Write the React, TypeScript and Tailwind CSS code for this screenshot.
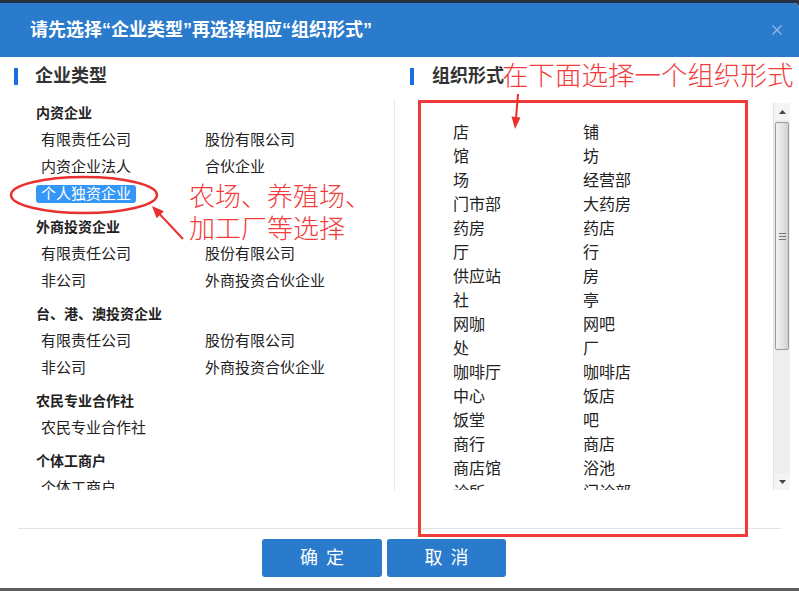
import React from 'react';

const CJK = { fontFamily: '"Liberation Sans","Noto Sans CJK SC",sans-serif' };

type Group = { title: string; rows: string[][] };

const GROUPS: Group[] = [
  {
    title: '内资企业',
    rows: [
      ['有限责任公司', '股份有限公司'],
      ['内资企业法人', '合伙企业'],
      ['个人独资企业'],
    ],
  },
  {
    title: '外商投资企业',
    rows: [
      ['有限责任公司', '股份有限公司'],
      ['非公司', '外商投资合伙企业'],
    ],
  },
  {
    title: '台、港、澳投资企业',
    rows: [
      ['有限责任公司', '股份有限公司'],
      ['非公司', '外商投资合伙企业'],
    ],
  },
  { title: '农民专业合作社', rows: [['农民专业合作社']] },
  { title: '个体工商户', rows: [['个体工商户']] },
];

const FORMS = [
  ['店', '铺'],
  ['馆', '坊'],
  ['场', '经营部'],
  ['门市部', '大药房'],
  ['药房', '药店'],
  ['厅', '行'],
  ['供应站', '房'],
  ['社', '亭'],
  ['网咖', '网吧'],
  ['处', '厂'],
  ['咖啡厅', '咖啡店'],
  ['中心', '饭店'],
  ['饭堂', '吧'],
  ['商行', '商店'],
  ['商店馆', '浴池'],
  ['诊所', '门诊部'],
  ['会所', '室'],
];

const SELECTED = '个人独资企业';

function Scrollbar() {
  return (
    <div className="w-[17px] h-[387px] mt-[3px] bg-[#eeeeee] border-l border-[#e2e2e2] flex flex-col">
      <div className="h-[17px] flex items-center justify-center bg-[#f4f4f4]">
        <svg width="7" height="4" viewBox="0 0 7 4">
          <polygon points="3.5,0 7,4 0,4" fill="#444" />
        </svg>
      </div>
      <div className="mt-[2px] mx-[1px] h-[228px] rounded-[2px] border border-[#9a9a9a] bg-gradient-to-r from-[#f2f2f2] via-[#e4e4e4] to-[#d0d0d0] flex flex-col items-center justify-center gap-[2px]">
        <div className="w-[7px] h-px bg-[#777]" />
        <div className="w-[7px] h-px bg-[#777]" />
        <div className="w-[7px] h-px bg-[#777]" />
      </div>
      <div className="flex-1" />
      <div className="h-[17px] flex items-center justify-center bg-[#f4f4f4]">
        <svg width="7" height="4" viewBox="0 0 7 4">
          <polygon points="0,0 7,0 3.5,4" fill="#444" />
        </svg>
      </div>
    </div>
  );
}

export default function App() {
  return (
    <div className="relative w-[799px] h-[591px] bg-[#283041] flex flex-col overflow-hidden" style={CJK}>
      <div className="h-[3px]" />
      {/* Dialog */}
      <div className="flex-1 bg-white rounded-tr-[5px] flex flex-col">
        <div className="h-[54px] bg-[#2b7bcc] rounded-tr-[5px] flex items-center justify-between pl-[30px] pr-[17px]">
          <span className="text-[18px] font-bold text-white">请先选择“企业类型”再选择相应“组织形式”</span>
          <svg width="10" height="10" viewBox="0 0 10 10" className="mt-[-1px]">
            <path d="M0.5 0.5 L9.5 9.5 M9.5 0.5 L0.5 9.5" stroke="#93b9e4" strokeWidth="1.3" />
          </svg>
        </div>

        <div className="flex pt-[10px]">
          {/* 企业类型 */}
          <div className="w-[400px] shrink-0 pl-[14px]">
            <div className="flex items-center h-[18px]">
              <div className="w-[4px] h-[17px] bg-[#1a6ee0]" />
              <span className="ml-[17px] text-[18px] leading-[18px] font-bold text-[#333]">企业类型</span>
            </div>
            <div className="mt-[15px] ml-[-14px] w-[395px] h-[390px] border-r border-[#e6e6e6] overflow-hidden pl-[36px]">
              {GROUPS.map((g) => (
                <div key={g.title} className="mb-[7px]">
                  <div className="h-[26px] flex items-center text-[14px] font-bold text-[#222]">{g.title}</div>
                  {g.rows.map((row, i) => (
                    <div key={i} className="h-[27px] grid grid-cols-[164px_164px] items-center">
                      {row.map((item) => (
                        <div key={item}>
                          <span
                            className={
                              item === SELECTED && g.title === '内资企业'
                                ? 'inline-block px-[5px] text-[15px] leading-[18px] rounded-[3px] bg-[#3497f7] text-white'
                                : 'inline-block px-[5px] text-[15px] leading-[18px] text-[#222]'
                            }
                          >
                            {item}
                          </span>
                        </div>
                      ))}
                    </div>
                  ))}
                </div>
              ))}
            </div>
          </div>

          {/* 组织形式 */}
          <div className="w-[399px] shrink-0 pl-[10px]">
            <div className="flex items-center h-[18px] whitespace-nowrap">
              <div className="w-[4px] h-[17px] shrink-0 bg-[#1a6ee0]" />
              <span className="ml-[18px] shrink-0 text-[18px] leading-[18px] font-bold text-[#333]">组织形式</span>
              <span className="ml-[-2px] shrink-0 text-[26.5px] leading-[27px] font-light text-[#f23c3c]">
                在下面选择一个组织形式
              </span>
            </div>
            <div className="mt-[15px] ml-[-10px] h-[390px] flex">
              <div className="w-[373px] h-[390px] overflow-hidden pl-[53px] pt-[21px]">
                {FORMS.map(([a, b]) => (
                  <div key={a + b} className="h-[24px] grid grid-cols-[130px_130px] items-center text-[16px] text-[#222]">
                    <span>{a}</span>
                    <span>{b}</span>
                  </div>
                ))}
              </div>
              <Scrollbar />
            </div>
          </div>
        </div>

        <div className="mt-[38px] mx-[18px] border-t border-[#e3e3e3]" />

        <div className="mt-[10px] pl-[262px] flex gap-[5px]">
          <button className="w-[120px] h-[38px] rounded-[3px] bg-[#2b7bcc] text-white text-[18px] tracking-[8px] pl-[8px]">
            确定
          </button>
          <button className="w-[119px] h-[38px] rounded-[3px] bg-[#2b7bcc] text-white text-[18px] tracking-[8px] pl-[8px]">
            取消
          </button>
        </div>
        <div className="flex-1" />
      </div>
      <div className="h-[3px] bg-[#5d5d5d]" />

      {/* Red annotations drawn over the dialog */}
      <svg className="absolute left-0 top-0 pointer-events-none" width="799" height="591" viewBox="0 0 799 591">
        <ellipse cx="84" cy="195" rx="73" ry="18" fill="none" stroke="#e8302e" strokeWidth="2.5" />
        <line x1="183" y1="239" x2="160" y2="214.5" stroke="#e8302e" strokeWidth="2" />
        <polygon points="152,206 163.9,211.3 156.6,218.2" fill="#e8302e" />
        <line x1="518" y1="94" x2="516" y2="118" stroke="#e8302e" strokeWidth="2" />
        <polygon points="515,129 520.5,117.4 511.5,116.6" fill="#e8302e" />
        <rect x="419.5" y="101.5" width="327" height="434" fill="none" stroke="#f03a3a" strokeWidth="3" />
      </svg>
      <div className="absolute left-[189px] top-[181px] text-[26px] leading-[32px] font-light text-[#f23c3c] whitespace-nowrap">
        <div>农场、养殖场、</div>
        <div>加工厂等选择</div>
      </div>
    </div>
  );
}
